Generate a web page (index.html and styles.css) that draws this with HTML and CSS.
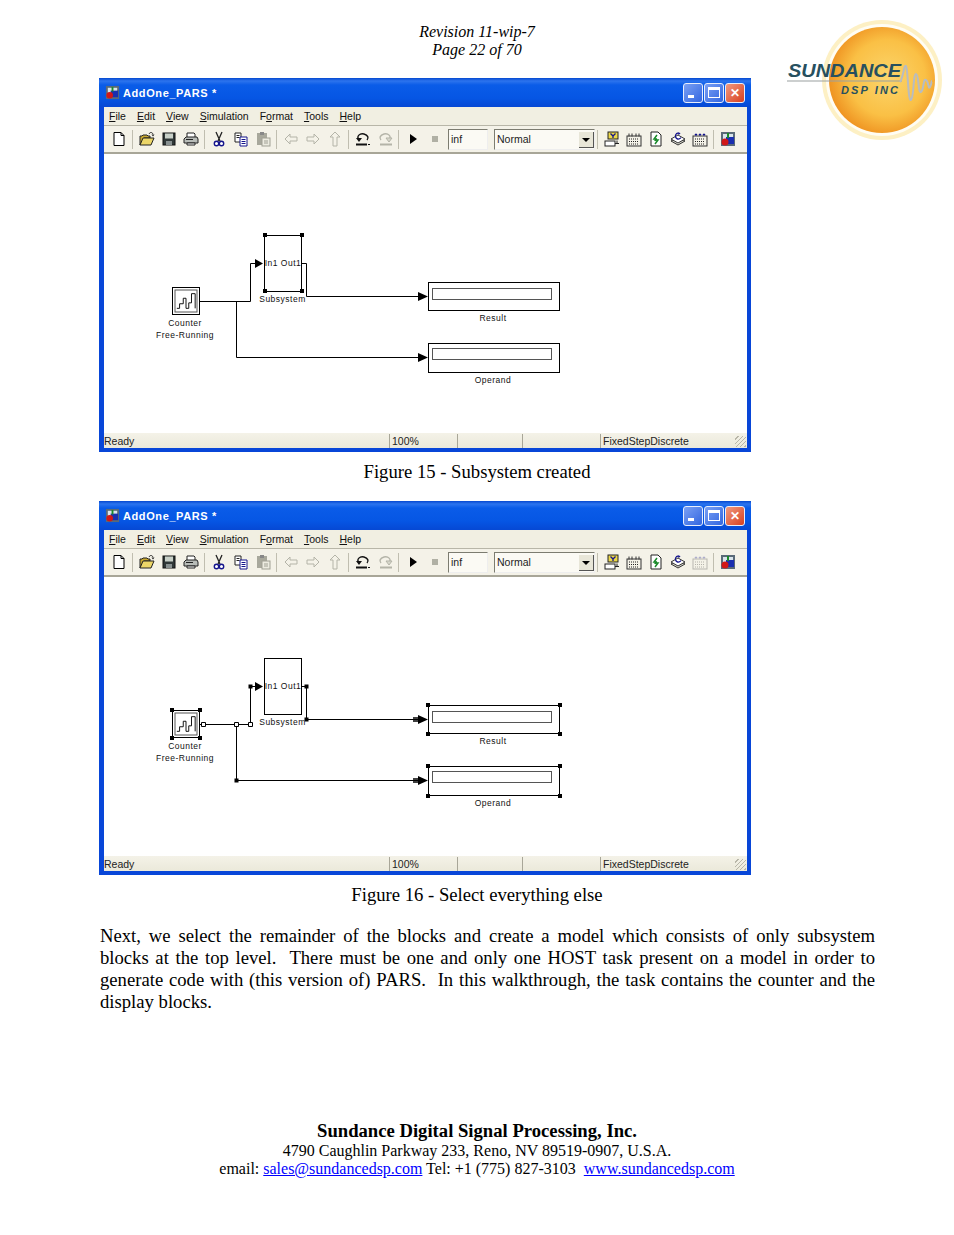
FILE: index.html
```html
<!DOCTYPE html>
<html lang="en">
  <head>
    <title>Revision 11-wip-7 - Page 22 of 70</title>
    <meta charset="utf-8">
    <link rel="stylesheet" href="styles.css">
  </head>
  <body>
    <svg class="defs" xmlns="http://www.w3.org/2000/svg">
      <symbol id="i-sim" viewBox="0 0 16 16">
        <rect x="1" y="1" width="14" height="14" fill="#5a6a78"/>
        <rect x="3" y="3" width="10" height="8" fill="#d8e4ec"/>
        <rect x="6" y="6" width="8" height="7" fill="#1a2fb0"/>
        <circle cx="5" cy="11" r="3.5" fill="#d01818"/>
        <path d="M7 2h2v5H7z" fill="#1a8a2a"/>
      </symbol>
      <symbol id="i-new" viewBox="0 0 16 16">
        <path d="M3 1.5h7l3 3v10H3z" fill="#fff" stroke="#000"/>
        <path d="M10 1.5v3h3" fill="none" stroke="#000"/>
      </symbol>
      <symbol id="i-open" viewBox="0 0 16 16">
        <path d="M1 14V5h2l1-1h4l1 1h2v2H5l-4 7" fill="#c8a830" stroke="#222"/>
        <path d="M1 14l3-7h11l-3 7z" fill="#ecd668" stroke="#222"/>
        <path d="M10 3c1-2 3-2 4 0" fill="none" stroke="#222"/>
        <path d="M12.5 3.5h3l-1.5 2z" fill="#222"/>
      </symbol>
      <symbol id="i-save" viewBox="0 0 16 16">
        <rect x="2" y="2" width="12" height="12" fill="#303838" stroke="#111"/>
        <rect x="4" y="2.5" width="8" height="5" fill="#c8d0c8"/>
        <rect x="5" y="10" width="6" height="4" fill="#889090"/>
      </symbol>
      <symbol id="i-print" viewBox="0 0 16 16">
        <path d="M4 6V2h7l1 1v3" fill="#fff" stroke="#222"/>
        <path d="M1 8l2-2h11l1 2v4H1z" fill="#b8bcb8" stroke="#222"/>
        <path d="M4 12h8v2H4z" fill="#fff" stroke="#222"/>
        <path d="M3 8.5h7" stroke="#222"/>
      </symbol>
      <symbol id="i-cut" viewBox="0 0 16 16">
        <path d="M5 1l4 9M11 1L7 10" fill="none" stroke="#222" stroke-width="1.3"/>
        <circle cx="5.5" cy="12.5" r="2.2" fill="#fff" stroke="#14148c" stroke-width="1.4"/>
        <circle cx="10.5" cy="12.5" r="2.2" fill="#fff" stroke="#14148c" stroke-width="1.4"/>
      </symbol>
      <symbol id="i-copy" viewBox="0 0 16 16">
        <path d="M2 2h6v9H2z" fill="#fff" stroke="#222"/>
        <path d="M3.5 4.5h3M3.5 6.5h3" stroke="#222"/>
        <path d="M7 6h7v9H7z" fill="#fff" stroke="#14148c"/>
        <path d="M8.5 8.5h4M8.5 10.5h4M8.5 12.5h4" stroke="#14148c"/>
      </symbol>
      <symbol id="i-paste" viewBox="0 0 16 16">
        <rect x="2" y="2" width="10" height="12" fill="#a8a89c"/>
        <rect x="5" y="1" width="4" height="3" fill="#888"/>
        <rect x="7" y="7" width="8" height="8" fill="#ecebe0" stroke="#a0a094"/>
        <path d="M9 10h4M9 12h4" stroke="#a0a094"/>
      </symbol>
      <symbol id="i-back" viewBox="0 0 16 16">
        <path d="M7 3L2 8l5 5v-3h7V6H7z" fill="#f4f2e8" stroke="#b4b4a8"/>
      </symbol>
      <symbol id="i-fwd" viewBox="0 0 16 16">
        <path d="M9 3l5 5-5 5v-3H2V6h7z" fill="#f4f2e8" stroke="#b4b4a8"/>
      </symbol>
      <symbol id="i-up" viewBox="0 0 16 16">
        <path d="M8 1l5 5h-3v9H6V6H3z" fill="#f4f2e8" stroke="#b4b4a8"/>
      </symbol>
      <symbol id="i-undo" viewBox="0 0 16 16">
        <path d="M4 9C1 5 5 2 9 3c4 1 5 4 3 6" fill="none" stroke="#111" stroke-width="1.4"/>
        <path d="M1 7h6L4 11z" fill="#111"/>
        <path d="M1 13.5h11" stroke="#111" stroke-width="2"/>
        <path d="M13 13.5h2" stroke="#111"/>
      </symbol>
      <symbol id="i-redo" viewBox="0 0 16 16">
        <path d="M12 9c3-4-1-7-5-6C3 4 2 7 4 9" fill="none" stroke="#b4b4a8" stroke-width="1.4"/>
        <path d="M15 7H9l3 4z" fill="#d8d8cc" stroke="#b4b4a8"/>
        <path d="M3 13.5h12" stroke="#b4b4a8" stroke-width="2"/>
      </symbol>
      <symbol id="i-play" viewBox="0 0 16 16">
        <path d="M5 3l7 5-7 5z" fill="#000"/>
      </symbol>
      <symbol id="i-stop" viewBox="0 0 16 16">
        <rect x="5" y="5" width="6" height="6" fill="#b0b0a4"/>
      </symbol>
      <symbol id="i-model" viewBox="0 0 16 16">
        <rect x="4" y="1" width="10" height="7" fill="#ecd84a" stroke="#222"/>
        <path d="M6.5 2.5L9 5l2.500-2.500M9 5v2" fill="none" stroke="#14148c" stroke-width="1.300"/>
        <rect x="1" y="10" width="10" height="5" fill="#fff" stroke="#222"/>
        <path d="M11 12.500h4M13 12.500v-3" stroke="#222"/>
      </symbol>
      <symbol id="i-lib" viewBox="0 0 16 16">
        <rect x="1" y="5" width="14" height="10" fill="#f4f2e8" stroke="#333"/>
        <path d="M3 2.500v3M6 2.500v3M10 2.500v3M13 2.500v3" stroke="#333"/>
        <path d="M3 8h10M3 10.500h10M3 13h10" stroke="#222" stroke-dasharray="1 1"/>
      </symbol>
      <symbol id="i-sync" viewBox="0 0 16 16">
        <path d="M3 1h7l3 3v11H3z" fill="#fff" stroke="#222"/>
        <path d="M9 4L6 8h2l-1 2" fill="none" stroke="#1a8a2a" stroke-width="1.500"/>
        <path d="M7 13l3-4H8l1-1" fill="none" stroke="#1a8a2a" stroke-width="1.500"/>
      </symbol>
      <symbol id="i-stack" viewBox="0 0 16 16">
        <path d="M8 6l7 4-7 4-7-4z" fill="#dcdcd0" stroke="#333"/>
        <path d="M8 4l7 4-7 4-7-4z" fill="#fff" stroke="#333"/>
        <path d="M10 2.500a3 3 0 1 0 1 4" fill="none" stroke="#14148c" stroke-width="1.200"/>
        <path d="M8 1.500l2.500 1-2 1.500z" fill="#14148c"/>
      </symbol>
      <symbol id="i-keys" viewBox="0 0 16 16">
        <rect x="1" y="5" width="14" height="10" fill="#f4f2e8" stroke="#333"/>
        <path d="M3 3l1 1 1-1M7 3l1 1 1-1M11 3l1 1 1-1" fill="none" stroke="#14148c" stroke-width="1.400"/>
        <path d="M3 8h10M3 10.500h10M3 13h10" stroke="#222" stroke-dasharray="1 1"/>
      </symbol>
      <symbol id="i-counter" viewBox="0 0 24 24">
        <path d="M2 20h3v-5h4V9h3v11h3v-6h3V4h4v16" fill="none" stroke="#000"/>
      </symbol>
    </svg>

    <header class="rev">
      <div>Revision 11-wip-7</div>
      <div>Page 22 of 70</div>
    </header>

    <svg class="logo" viewBox="0 0 170 150" xmlns="http://www.w3.org/2000/svg">
      <defs>
        <radialGradient id="sun" cx="55%" cy="48%" r="55%">
          <stop offset="0" stop-color="#fbd56c"/>
          <stop offset="0.65" stop-color="#fac045"/>
          <stop offset="1" stop-color="#ef9422"/>
        </radialGradient>
      </defs>
      <circle cx="98" cy="70" r="60" fill="#fdf0c4"/>
      <circle cx="98" cy="70" r="56" fill="#fffdf4"/>
      <circle cx="98" cy="70" r="53" fill="url(#sun)"/>
      <text x="4" y="67" class="logo-name" textLength="113" lengthAdjust="spacingAndGlyphs">SUNDANCE</text>
      <path d="M3 71h115" stroke="#9aa0a0" stroke-width="1.200"/>
      <text x="57" y="84" class="logo-sub" textLength="57" lengthAdjust="spacing">DSP INC</text>
      <path d="M116 72c3-3 4-18 6-16s2 36 5 34 2-26 5-26 2 20 5 18 2-14 5-12 2 10 4 7 1-6 2-6" fill="none" stroke="#b8bcc0" stroke-width="2"/>
    </svg>

    <main class="pagebody">
      <section class="win">
        <div class="titlebar">
          <svg class="ticon"><use href="#i-sim"/></svg>
          <span class="ttext">AddOne_PARS *</span>
          <span class="wbtn"><i class="g-min"></i></span>
          <span class="wbtn"><i class="g-max"></i></span>
          <span class="wbtn close"><i class="g-x">✕</i></span>
        </div>
        <nav class="menu">
          <span><u>F</u>ile</span><span><u>E</u>dit</span><span><u>V</u>iew</span><span><u>S</u>imulation</span><span>F<u>o</u>rmat</span><span><u>T</u>ools</span><span><u>H</u>elp</span>
        </nav>
        <div class="toolbar">
          <svg class="tb"><use href="#i-new"/></svg><b class="sep"></b>
          <svg class="tb"><use href="#i-open"/></svg><svg class="tb"><use href="#i-save"/></svg><svg class="tb"><use href="#i-print"/></svg><b class="sep"></b>
          <svg class="tb"><use href="#i-cut"/></svg><svg class="tb"><use href="#i-copy"/></svg><svg class="tb"><use href="#i-paste"/></svg><b class="sep"></b>
          <svg class="tb"><use href="#i-back"/></svg><svg class="tb"><use href="#i-fwd"/></svg><svg class="tb"><use href="#i-up"/></svg><b class="sep"></b>
          <svg class="tb"><use href="#i-undo"/></svg><svg class="tb"><use href="#i-redo"/></svg><b class="sep"></b>
          <svg class="tb"><use href="#i-play"/></svg><svg class="tb"><use href="#i-stop"/></svg>
          <span class="field stoptime">inf</span>
          <span class="field mode">Normal<i class="drop"></i></span><b class="sep"></b>
          <svg class="tb"><use href="#i-model"/></svg><svg class="tb"><use href="#i-lib"/></svg><svg class="tb"><use href="#i-sync"/></svg><svg class="tb"><use href="#i-stack"/></svg><svg class="tb"><use href="#i-keys"/></svg><b class="sep"></b>
          <svg class="tb"><use href="#i-sim"/></svg>
        </div>
        <svg class="canvas" viewBox="104 154 643 279" xmlns="http://www.w3.org/2000/svg">
          <rect x="172.500" y="287.500" width="27" height="27" class="blk"/>
          <rect x="175" y="290" width="22" height="22" class="inner"/>
          <use href="#i-counter" x="175" y="290" width="22" height="22"/>
          <rect x="264.500" y="235.500" width="37" height="56" class="blk"/>
          <rect x="428.500" y="282.500" width="131" height="28" class="blk"/>
          <rect x="432.500" y="288.500" width="119" height="11" class="inner"/>
          <rect x="428.500" y="343.500" width="131" height="29" class="blk"/>
          <rect x="432.500" y="348.500" width="119" height="11" class="inner"/>
          <path class="wire" d="M200 301.500h50.500v-38h5M302 263.500h4.500v33H420M236.500 301.500v56H420"/>
          <path d="M255 259l8 4.500-8 4.500zM418 292l10 4.500-10 4.500zM418 353l10 4.500-10 4.500z"/>
          <path d="M263 233h4v4h-4zM300 233h4v4h-4zM263 289h4v4h-4zM300 289h4v4h-4z"/>
          <text x="283" y="266" class="lbl" text-anchor="middle">In1 Out1</text>
          <text x="282.500" y="302" class="lbl" text-anchor="middle">Subsystem</text>
          <text x="185" y="326" class="lbl" text-anchor="middle">Counter</text>
          <text x="185" y="338" class="lbl" text-anchor="middle">Free-Running</text>
          <text x="493" y="321" class="lbl" text-anchor="middle">Result</text>
          <text x="493" y="383" class="lbl" text-anchor="middle">Operand</text>
        </svg>
        <footer class="status">
          <span class="s-ready">Ready</span><span class="s-zoom">100%</span><span class="s-a"></span><span class="s-b"></span><span class="s-solver">FixedStepDiscrete</span><i class="grip"></i>
        </footer>
      </section>
      <p class="caption first">Figure 15 - Subsystem created</p>

      <section class="win">
        <div class="titlebar">
          <svg class="ticon"><use href="#i-sim"/></svg>
          <span class="ttext">AddOne_PARS *</span>
          <span class="wbtn"><i class="g-min"></i></span>
          <span class="wbtn"><i class="g-max"></i></span>
          <span class="wbtn close"><i class="g-x">✕</i></span>
        </div>
        <nav class="menu">
          <span><u>F</u>ile</span><span><u>E</u>dit</span><span><u>V</u>iew</span><span><u>S</u>imulation</span><span>F<u>o</u>rmat</span><span><u>T</u>ools</span><span><u>H</u>elp</span>
        </nav>
        <div class="toolbar">
          <svg class="tb"><use href="#i-new"/></svg><b class="sep"></b>
          <svg class="tb"><use href="#i-open"/></svg><svg class="tb"><use href="#i-save"/></svg><svg class="tb"><use href="#i-print"/></svg><b class="sep"></b>
          <svg class="tb"><use href="#i-cut"/></svg><svg class="tb"><use href="#i-copy"/></svg><svg class="tb"><use href="#i-paste"/></svg><b class="sep"></b>
          <svg class="tb"><use href="#i-back"/></svg><svg class="tb"><use href="#i-fwd"/></svg><svg class="tb"><use href="#i-up"/></svg><b class="sep"></b>
          <svg class="tb"><use href="#i-undo"/></svg><svg class="tb"><use href="#i-redo"/></svg><b class="sep"></b>
          <svg class="tb"><use href="#i-play"/></svg><svg class="tb"><use href="#i-stop"/></svg>
          <span class="field stoptime">inf</span>
          <span class="field mode">Normal<i class="drop"></i></span><b class="sep"></b>
          <svg class="tb"><use href="#i-model"/></svg><svg class="tb"><use href="#i-lib"/></svg><svg class="tb"><use href="#i-sync"/></svg><svg class="tb"><use href="#i-stack"/></svg><svg class="tb dim"><use href="#i-keys"/></svg><b class="sep"></b>
          <svg class="tb"><use href="#i-sim"/></svg>
        </div>
        <svg class="canvas" viewBox="104 154 643 279" xmlns="http://www.w3.org/2000/svg">
          <rect x="172.500" y="287.500" width="27" height="27" class="blk"/>
          <rect x="175" y="290" width="22" height="22" class="inner"/>
          <use href="#i-counter" x="175" y="290" width="22" height="22"/>
          <rect x="264.500" y="235.500" width="37" height="56" class="blk"/>
          <rect x="428.500" y="282.500" width="131" height="28" class="blk"/>
          <rect x="432.500" y="288.500" width="119" height="11" class="inner"/>
          <rect x="428.500" y="343.500" width="131" height="29" class="blk"/>
          <rect x="432.500" y="348.500" width="119" height="11" class="inner"/>
          <path class="wire" d="M200 301.500h50.500v-38h5M302 263.500h4.500v33H420M236.500 301.500v56H420"/>
          <path d="M255 259l8 4.500-8 4.500zM418 292l10 4.500-10 4.500zM418 353l10 4.500-10 4.500z"/>
          <path d="M170 285h4v4h-4zM198 285h4v4h-4zM170 313h4v4h-4zM198 313h4v4h-4zM426 280h4v4h-4zM558 280h4v4h-4zM426 309h4v4h-4zM558 309h4v4h-4zM426 341h4v4h-4zM558 341h4v4h-4zM426 371h4v4h-4zM558 371h4v4h-4zM304.500 294.500h4v4h-4zM234.500 355.500h4v4h-4zM248.500 261.500h4v4h-4zM304.500 261.500h4v4h-4z"/>
          <path class="node" d="M201.500 299.500h4v4h-4zM234.500 299.500h4v4h-4zM248.500 299.500h4v4h-4z"/>
          <path class="wire thin" d="M413 295h5M413 298h5M413 356h5M413 359h5"/>
          <text x="283" y="266" class="lbl" text-anchor="middle">In1 Out1</text>
          <text x="282.500" y="302" class="lbl" text-anchor="middle">Subsystem</text>
          <text x="185" y="326" class="lbl" text-anchor="middle">Counter</text>
          <text x="185" y="338" class="lbl" text-anchor="middle">Free-Running</text>
          <text x="493" y="321" class="lbl" text-anchor="middle">Result</text>
          <text x="493" y="383" class="lbl" text-anchor="middle">Operand</text>
        </svg>
        <footer class="status">
          <span class="s-ready">Ready</span><span class="s-zoom">100%</span><span class="s-a"></span><span class="s-b"></span><span class="s-solver">FixedStepDiscrete</span><i class="grip"></i>
        </footer>
      </section>
      <p class="caption">Figure 16 - Select everything else</p>

      <p class="para">Next, we select the remainder of the blocks and create a model which consists of only subsystem blocks at the top level.&nbsp; There must be one and only one HOST task present on a model in order to generate code with (this version of) PARS.&nbsp; In this walkthrough, the task contains the counter and the display blocks.</p>
    </main>

    <footer class="company">
      <div class="c-name">Sundance Digital Signal Processing, Inc.</div>
      <div>4790 Caughlin Parkway 233, Reno, NV 89519-0907, U.S.A.</div>
      <div>email: <a href="#">sales@sundancedsp.com</a> Tel: +1 (775) 827-3103&nbsp; <a href="#">www.sundancedsp.com</a></div>
    </footer>
  </body>
</html>
```

FILE: styles.css
```css
html, body { margin: 0; padding: 0; background: #fff; }
body {
	position: relative;
	width: 954px;
	height: 1235px;
	overflow: hidden;
	font-family: "Liberation Serif", serif;
	color: #000;
}
.defs { display: none; }

.rev {
	padding-top: 23px;
	font-style: italic;
	font-size: 16px;
	line-height: 18px;
	text-align: center;
}
.logo {
	position: absolute;
	left: 784px;
	top: 10px;
	width: 170px;
	height: 150px;
}
.logo-name {
	font: italic bold 18px "Liberation Sans", sans-serif;
	fill: #27505f;
}
.logo-sub {
	font: italic bold 11px "Liberation Sans", sans-serif;
	fill: #27505f;
}

.pagebody { padding-top: 19px; }

.win {
	box-sizing: border-box;
	width: 652px;
	height: 374px;
	margin-left: 99px;
	border-left: 5px solid #0846d8;
	border-right: 4px solid #0846d8;
	border-bottom: 4px solid #0846d8;
	background: #f1efe2;
	font-family: "Liberation Sans", sans-serif;
	font-size: 10.5px;
}
.titlebar {
	display: flex;
	align-items: center;
	height: 29px;
	margin: 0 -4px 0 -5px;
	padding: 0 6px 0 6px;
	box-sizing: border-box;
	background: linear-gradient(#0548d0 0, #2c74ee 3px, #0a5ce8 7px, #0656e4 20px, #0648d4 29px);
}
.ticon { width: 15px; height: 15px; margin-right: 3px; }
.ttext {
	flex: 1;
	color: #fff;
	font-weight: bold;
	font-size: 11px;
	letter-spacing: 0.6px;
}
.wbtn {
	display: flex;
	align-items: center;
	justify-content: center;
	box-sizing: border-box;
	width: 20px;
	height: 20px;
	margin-left: 1px;
	border: 1px solid #e8eefc;
	border-radius: 3px;
	background: linear-gradient(135deg, #7aa0f4, #3266e0);
}
.wbtn.close { background: linear-gradient(135deg, #f09a80, #d84020); }
.g-min {
	width: 6px;
	height: 3px;
	margin-top: 8px;
	margin-right: 4px;
	background: #fff;
}
.g-max {
	box-sizing: border-box;
	width: 12px;
	height: 11px;
	border: 1px solid #fff;
	border-top-width: 3px;
}
.g-x {
	color: #fff;
	font-style: normal;
	font-weight: bold;
	font-size: 12px;
	line-height: 1;
}

.menu {
	display: flex;
	align-items: center;
	gap: 11px;
	height: 18px;
	padding-left: 5px;
	background: #f1efe2;
	color: #111;
}
.toolbar {
	display: flex;
	align-items: center;
	box-sizing: border-box;
	height: 29px;
	padding-left: 4px;
	border-top: 1px solid #b8b6a8;
	border-bottom: 2px solid #a8a698;
	background: #f4f2e8;
}
.tb {
	flex: none;
	width: 22px;
	height: 16px;
}
.tb.dim { opacity: 0.3; }
.sep {
	flex: none;
	box-sizing: border-box;
	width: 6px;
	height: 19px;
	border-left: 1px solid #c0beb0;
	margin-left: 2px;
	margin-right: -2px;
	padding: 0;
}
.field {
	position: relative;
	flex: none;
	box-sizing: border-box;
	height: 21px;
	padding-left: 2px;
	border: 1px solid;
	border-color: #7c7c70 #eeeeee #eeeeee #7c7c70;
	background: #fbfaf4;
	color: #222;
	line-height: 19px;
}
.stoptime { width: 40px; margin-left: 2px; }
.mode { width: 101px; margin-left: 6px; }
.drop {
	position: absolute;
	right: 0;
	top: 2px;
	width: 14px;
	height: 15px;
	background: #e8e6d8;
	border-right: 1px solid #555;
	border-bottom: 1px solid #555;
}
.drop::after {
	content: "";
	position: absolute;
	left: 3px;
	top: 6px;
	border: 4px solid transparent;
	border-top: 4px solid #000;
	border-bottom: 0;
}

.canvas {
	display: block;
	width: 643px;
	height: 279px;
	background: #fff;
}
.blk { fill: #fff; stroke: #000; stroke-width: 1; }
.inner { fill: #fff; stroke: #555; stroke-width: 1; }
.wire { fill: none; stroke: #000; stroke-width: 1; }
.thin { stroke-width: 1.5; }
.node { fill: #fff; stroke: #000; stroke-width: 1; }
.lbl {
	font: 8.5px "Liberation Sans", sans-serif;
	letter-spacing: 0.5px;
	fill: #111;
}

.status {
	position: relative;
	display: flex;
	align-items: center;
	height: 15px;
	background: linear-gradient(#f4f2e8, #ebe9da);
	color: #222;
}
.status span {
	box-sizing: border-box;
	height: 14px;
	line-height: 14px;
	border-left: 1px solid #a8a698;
	padding-left: 2px;
}
.status .s-ready { width: 285px; border-left: 0; padding-left: 0; }
.s-zoom { width: 68px; }
.s-a { width: 65px; }
.s-b { width: 78px; }
.s-solver { width: 140px; }
.grip {
	position: absolute;
	right: 1px;
	bottom: 1px;
	width: 11px;
	height: 11px;
	background: repeating-linear-gradient(135deg, transparent 0 2px, #b8b6a8 2px 3px);
}

.caption {
	margin: 9px 0 0;
	font-size: 18.67px;
	line-height: 22px;
	text-align: center;
}
.caption.first { margin-bottom: 18px; }
.para {
	box-sizing: border-box;
	width: 775px;
	margin: 19px 0 0 100px;
	font-size: 18.67px;
	line-height: 22px;
	text-align: justify;
}

.company {
	margin-top: 107px;
	font-size: 16px;
	line-height: 18px;
	text-align: center;
}
.c-name {
	font-weight: bold;
	font-size: 18.67px;
	line-height: 22px;
}
.company a { color: #0000ff; }
```
